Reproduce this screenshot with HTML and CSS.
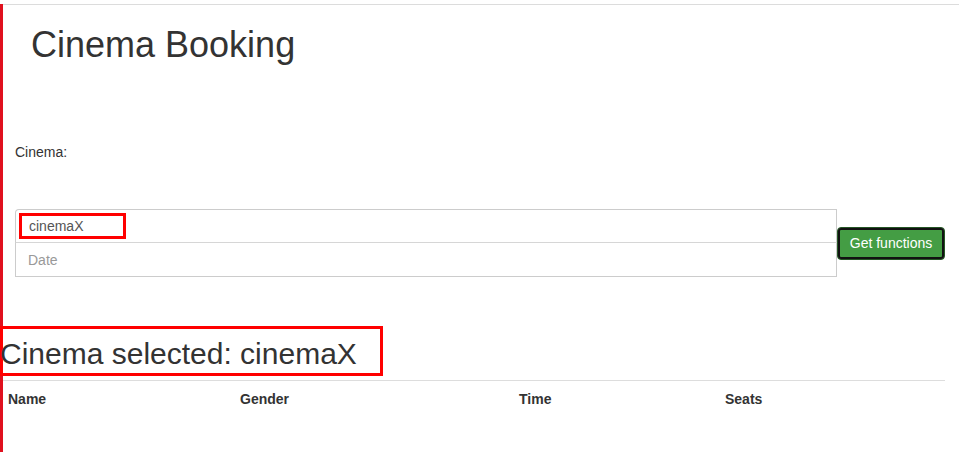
FILE: index.html
```html
<!DOCTYPE html>
<html>
<head>
<meta charset="utf-8">
<link rel="stylesheet" href="styles.css">
</head>
<body>
<div class="page">
  <div class="top-rule"></div>
  <h1 class="title">Cinema Booking</h1>
  <label class="label">Cinema:</label>
  <div class="form-row">
    <div class="inputs">
      <div class="input filled"><span class="value">cinemaX</span></div>
      <div class="input placeholder">Date</div>
    </div>
    <button class="btn">Get functions</button>
  </div>
  <div class="selected-wrap">
    <h2 class="selected">Cinema selected: cinemaX</h2>
  </div>
  <div class="table">
    <div class="th">Name</div>
    <div class="th">Gender</div>
    <div class="th">Time</div>
    <div class="th">Seats</div>
  </div>
</div>
</body>
</html>
```

FILE: styles.css
```css
html, body {
  margin: 0;
  padding: 0;
  background: #fff;
}
body {
  font-family: "Liberation Sans", Arial, sans-serif;
  font-size: 14px;
  color: #333;
}
.page {
  border-left: 3px solid #e0101e;
  min-height: 452px;
  box-sizing: border-box;
  width: 959px;
}
.top-rule {
  height: 0;
  border-top: 1px solid #dcdcdc;
  margin-top: 4px;
}
.title {
  margin: 20px 0 0 28px;
  font-size: 36px;
  font-weight: 400;
  line-height: 40px;
  color: #333;
}
.label {
  display: block;
  margin: 79px 0 0 12px;
  font-size: 14px;
  line-height: 16px;
  color: #333;
}
.form-row {
  display: flex;
  align-items: center;
  margin: 49px 0 0 12px;
}
.inputs {
  width: 822px;
  display: flex;
  flex-direction: column;
}
.input {
  height: 34px;
  box-sizing: border-box;
  border: 1px solid #ccc;
  padding: 0 12px;
  display: flex;
  align-items: center;
  font-size: 14px;
}
.input.filled {
  border-radius: 4px 0 0 0;
  border-bottom-color: #d6d6d6;
  padding-left: 3px;
}
.input.placeholder {
  border-top: none;
  height: 34px;
  color: #999;
}
.value {
  display: inline-block;
  border: 3px solid #f00;
  width: 107px;
  height: 26px;
  box-sizing: border-box;
  padding-left: 7px;
  line-height: 20px;
  color: #555;
}
.btn {
  width: 108px;
  height: 33px;
  margin: 0;
  font-family: "Liberation Sans", Arial, sans-serif;
  font-size: 14px;
  color: #fff;
  background: #449d44;
  border: 1px solid #255625;
  border-radius: 4px;
  outline: 2px solid #111;
  outline-offset: -3px;
  box-shadow: inset 0 0 0 1px #ffffff55;
  padding: 0;
}
.selected-wrap {
  margin: 49px 0 0 -3px;
  width: 383px;
  height: 50px;
  box-sizing: border-box;
  border: 3px solid #f00;
  display: flex;
  align-items: flex-end;
}
.selected {
  margin: 0 0 2px -3px;
  font-size: 30px;
  font-weight: 400;
  line-height: 34px;
  color: #333;
  white-space: nowrap;
}
.table {
  margin-top: 4px;
  width: 942px;
  border-top: 1px solid #ddd;
  display: grid;
  grid-template-columns: 232px 279px 206px 225px;
}
.th {
  padding: 9px 5px;
  font-weight: 700;
  font-size: 14px;
  line-height: 18px;
  color: #333;
}
```
